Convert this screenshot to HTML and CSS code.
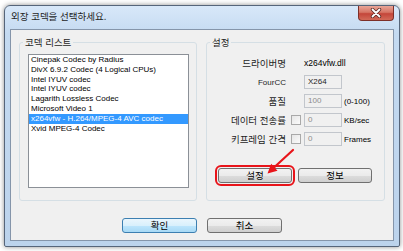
FILE: index.html
```html
<!DOCTYPE html>
<html lang="ko">
<head>
  <meta charset="UTF-8" />
  <title>외장 코덱을 선택하세요.</title>
  <link rel="stylesheet" href="styles.css">
</head>
<body>
  <div class="window" role="dialog" aria-label="외장 코덱을 선택하세요.">
    <div class="titlebar">
      <span class="title">외장 코덱을 선택하세요.</span>
      <button class="close-btn" aria-label="닫기">
        <svg width="12" height="10" viewBox="0 0 12 10">
          <path d="M2.5 1.5 L9.5 8.5 M9.5 1.5 L2.5 8.5" stroke="#5a2a24" stroke-width="3.4" stroke-linecap="round"/>
          <path d="M2.5 1.5 L9.5 8.5 M9.5 1.5 L2.5 8.5" stroke="#ffffff" stroke-width="1.8" stroke-linecap="round"/>
        </svg>
      </button>
    </div>

    <div class="client">
      <div class="panels">
        <fieldset class="group codec-group">
          <legend>코덱 리스트</legend>
          <ul class="listbox">
            <li>Cinepak Codec by Radius</li>
            <li>DivX 6.9.2 Codec (4 Logical CPUs)</li>
            <li>Intel IYUV codec</li>
            <li>Intel IYUV codec</li>
            <li>Lagarith Lossless Codec</li>
            <li>Microsoft Video 1</li>
            <li class="selected">x264vfw - H.264/MPEG-4 AVC codec</li>
            <li>Xvid MPEG-4 Codec</li>
          </ul>
        </fieldset>

        <fieldset class="group settings-group">
          <legend>설정</legend>
          <div class="form-grid">
            <span class="label">드라이버명</span>
            <span class="value">x264vfw.dll</span>

            <span class="label latin">FourCC</span>
            <span class="textbox readonly">X264</span>

            <span class="label">품질</span>
            <span class="textbox disabled">100</span>
            <span class="suffix">(0-100)</span>

            <span class="label">데이터 전송률</span>
            <span class="checkbox"></span>
            <span class="textbox disabled">0</span>
            <span class="suffix">KB/sec</span>

            <span class="label">키프레임 간격</span>
            <span class="checkbox"></span>
            <span class="textbox disabled">0</span>
            <span class="suffix">Frames</span>
          </div>
          <div class="group-buttons">
            <button class="btn callout">설정</button>
            <button class="btn">정보</button>
          </div>
        </fieldset>
      </div>

      <div class="footer">
        <button class="btn btn-default">확인</button>
        <button class="btn">취소</button>
      </div>
    </div>
  </div>

  <!-- red pointer drawn over the dialog -->
  <svg class="pointer" width="40" height="36" viewBox="0 0 40 36">
    <line x1="33" y1="5" x2="14" y2="22.5" stroke="#e8141a" stroke-width="2.2" stroke-linecap="round"/>
    <polygon points="7.5,28.5 17.5,25.8 11.2,18.8" fill="#e8141a"/>
  </svg>
</body>
</html>
```

FILE: styles.css
```css
* {
  box-sizing: border-box;
}

body {
  margin: 0;
  width: 403px;
  height: 251px;
  background: #ffffff;
  position: relative;
  overflow: hidden;
  font-family: "Noto Sans CJK KR", "Liberation Sans", sans-serif;
  font-size: 9.5px;
  color: #000;
}

.window {
  margin: 5px 0 0 4px;
  width: 396px;
  height: 242px;
  border: 1px solid #56657a;
  border-radius: 6px 6px 2px 2px;
  padding: 0 5px 5px 5px;
  background: linear-gradient(#d8e8f9, #c4daf1 28px, #bcd3ec);
  box-shadow: 0 0 5px rgba(0, 0, 0, 0.45);
  display: flex;
  flex-direction: column;
}

.titlebar {
  height: 23px;
  display: flex;
  justify-content: space-between;
  align-items: flex-start;
}

.title {
  padding: 4px 0 0 1px;
  line-height: 12px;
  color: #1e1e1e;
}

.close-btn {
  width: 36px;
  height: 15px;
  margin: 0;
  padding: 0;
  border: 1px solid #7d2f28;
  border-top: none;
  border-radius: 0 0 4px 4px;
  background: linear-gradient(#e9a597, #d67565 45%, #c4463a 55%, #d26a58);
  display: flex;
  justify-content: center;
  align-items: center;
}

.client {
  flex: 1;
  background: #f0f0f0;
  border: 1px solid #8595aa;
  display: flex;
  flex-direction: column;
}

.panels {
  flex: 1;
  display: flex;
  gap: 9px;
  padding: 6px 8px 0 8px;
}

.group {
  margin: 0;
  min-width: 0;
  border: 1px solid #d5dfe5;
  border-radius: 3px;
}

.group legend {
  margin-left: -5px;
  padding: 0 2px;
  line-height: 12px;
  color: #1e1e1e;
}

.codec-group {
  width: 178px;
  padding: 6px 7px 11px 8px;
}

.settings-group {
  width: 179px;
  padding: 8px 8px 0 8px;
}

.listbox {
  list-style: none;
  margin: 0;
  padding: 0;
  height: 134px;
  background: #ffffff;
  border: 1px solid #8b9097;
  font-family: "Liberation Sans", sans-serif;
  font-size: 8px;
  overflow: hidden;
}

.listbox li {
  height: 9.8px;
  line-height: 9.8px;
  padding-left: 2px;
  white-space: nowrap;
}

.listbox li.selected {
  background: #3399ff;
  color: #ffffff;
}

.form-grid {
  display: grid;
  grid-template-columns: 71px 18px 38px auto;
  grid-auto-rows: 14px;
  row-gap: 5px;
  align-items: center;
}

.label {
  grid-column: 1;
  text-align: right;
  white-space: nowrap;
  color: #1e1e1e;
}

.label.latin,
.value,
.textbox,
.suffix {
  font-family: "Liberation Sans", sans-serif;
  font-size: 8px;
}

.value {
  grid-column: 3 / 5;
  font-size: 8.5px;
}

.checkbox {
  grid-column: 2;
  justify-self: end;
  margin-right: 3px;
  width: 10px;
  height: 10px;
  border: 1px solid #a9a9a9;
  background: linear-gradient(135deg, #e6e6e6, #fbfbfb);
}

.textbox {
  grid-column: 3;
  height: 14px;
  border: 1px solid #c2c6cc;
  background: #f0f0f0;
  padding-left: 3px;
  line-height: 12px;
}

.textbox.readonly {
  color: #1e1e1e;
}

.textbox.disabled {
  color: #8c8c8c;
}

.suffix {
  grid-column: 4;
  padding-left: 2px;
  white-space: nowrap;
}

.group-buttons {
  display: flex;
  gap: 6px;
  margin-top: 22px;
  padding-left: 3px;
}

.btn {
  width: 74px;
  height: 15px;
  margin: 0;
  padding: 0;
  border: 1px solid #707070;
  border-radius: 3px;
  background: linear-gradient(#f2f2f2, #ebebeb 50%, #dddddd 50%, #cfcfcf);
  font-family: "Noto Sans CJK KR", sans-serif;
  font-size: 9.5px;
  line-height: 13px;
  color: #000;
}

.btn-default {
  border-color: #3c7fb1;
  background: linear-gradient(#eaf6fd, #d9f0fc 50%, #bee6fd 50%, #a7d9f5);
}

.callout {
  outline: 2px solid #e8141a;
  outline-offset: 1px;
}

.footer {
  display: flex;
  justify-content: center;
  gap: 10px;
  padding: 17px 0 7px 0;
}

.footer .btn {
  width: 75px;
}

.pointer {
  position: absolute;
  left: 260px;
  top: 145px;
}
```
